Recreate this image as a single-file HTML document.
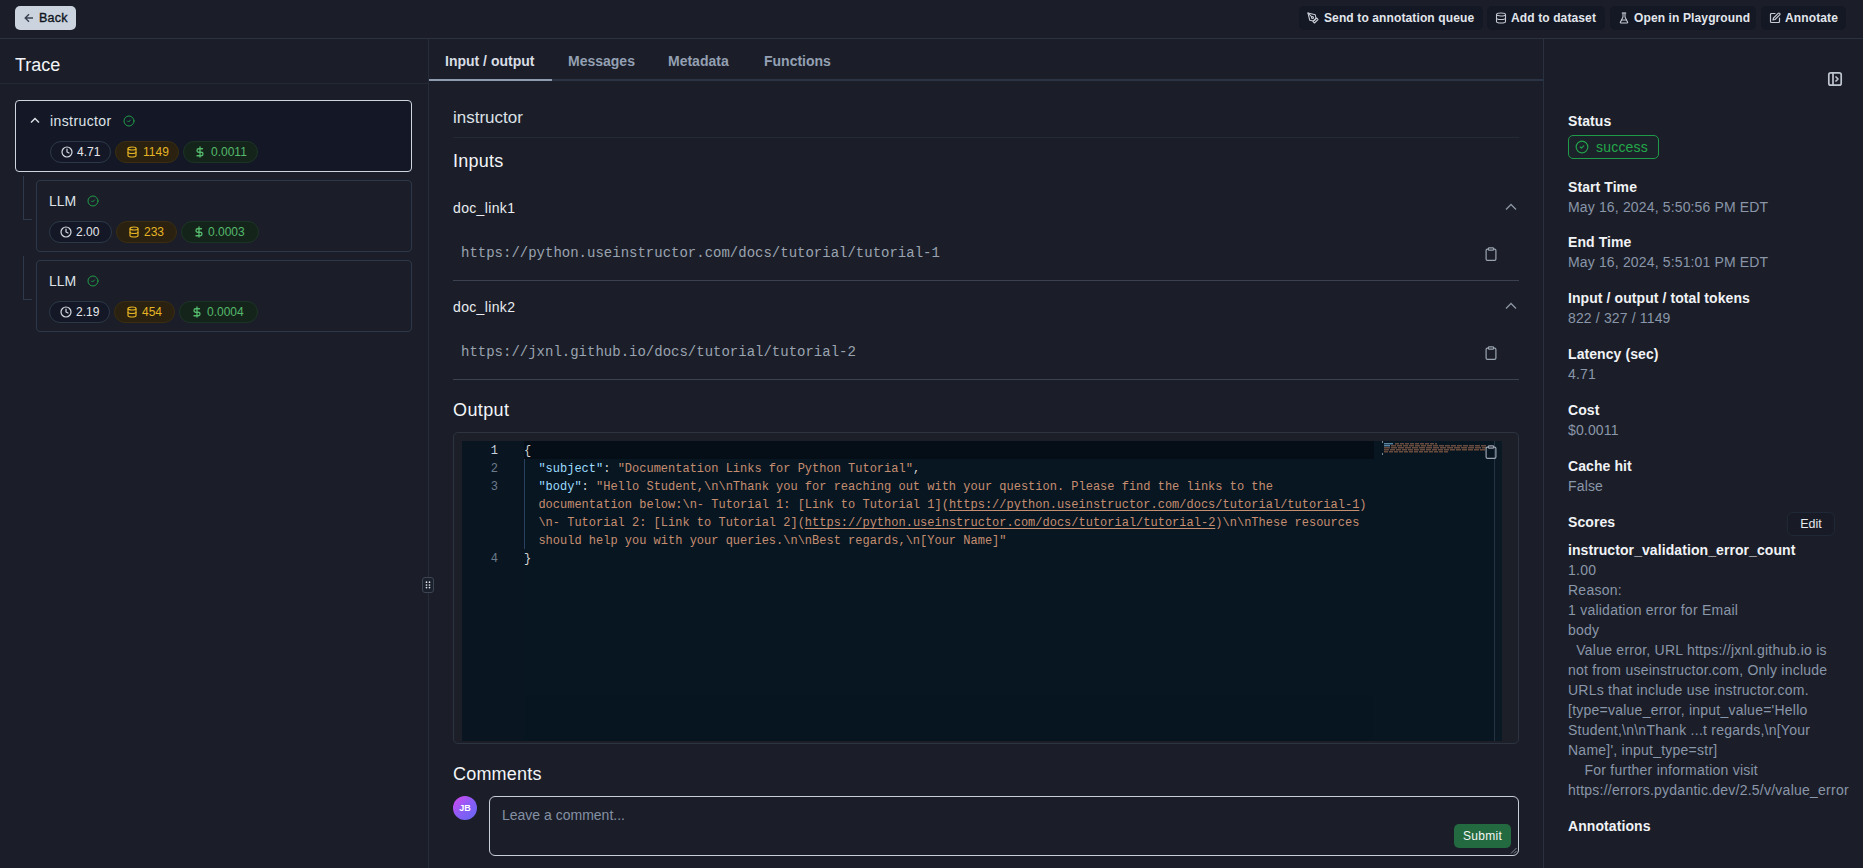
<!DOCTYPE html>
<html><head><meta charset="utf-8">
<style>
*{box-sizing:border-box;margin:0;padding:0}
html,body{width:1863px;height:868px;overflow:hidden;background:#1b1e28;font-family:"Liberation Sans",sans-serif;color:#e6e9ee}
.abs{position:absolute}
.hline{position:absolute;height:1px;background:#2a3240}
.vline{position:absolute;width:1px;background:#2a3240}
.tbtn{position:absolute;top:6px;height:24px;background:#141824;border-radius:5px;font-size:12px;font-weight:700;color:#e2e6ec;line-height:24px;white-space:nowrap;letter-spacing:0.12px}
.tbtn svg{position:absolute;top:6px}
.tbtn span{position:absolute;top:0}
.node{position:absolute;border:1px solid #2c3849;border-radius:4px;background:#1b1e28}
.node.sel{border-color:#cfd5de;background:#141826}
.nname{position:absolute;font-size:14px;color:#dfe3e8;white-space:nowrap}
.pill{position:absolute;height:22px;border-radius:11px;border:1px solid #2c3848;font-size:12px;line-height:20px;white-space:nowrap;background:#141826;color:#e5e7eb}
.pill svg{position:absolute;top:4px}
.pill span{position:absolute;top:0}
.pill.y{background:#2a2110;border-color:#3a2d10;color:#e5b424}
.pill.g{background:#14241b;border-color:#1c3425;color:#55b96c}
.tab{position:absolute;top:53px;font-size:14px;font-weight:700;color:#94a0b3;white-space:nowrap}
.lbl{position:absolute;left:1568px;font-size:14px;font-weight:700;color:#f1f3f6;white-space:nowrap;letter-spacing:0.08px}
.val{position:absolute;left:1568px;font-size:14px;color:#8a96a9;letter-spacing:0.15px;white-space:nowrap}
.mono{font-family:"Liberation Mono",monospace}
.code{position:absolute;font-family:"Liberation Mono",monospace;font-size:12px;line-height:18px;white-space:pre;color:#c68e70}
.k{color:#9cdcfe}.p{color:#d4d4d4}
.u{text-decoration:underline;text-underline-offset:2px}
</style></head><body>

<!-- top bar -->
<div class="abs" style="left:15px;top:6px;width:61px;height:24px;background:#cbd3de;border-radius:5px"></div>
<svg class="abs" style="left:24px;top:13px" width="10" height="10" viewBox="0 0 10 10"><path d="M9 5H1.5M5 1.2L1.2 5L5 8.8" stroke="#3b4252" stroke-width="1.4" fill="none"/></svg>
<div class="abs" style="left:39px;top:11px;font-size:12.5px;font-weight:400;color:#0f1420;-webkit-text-stroke:0.35px #0f1420;letter-spacing:0.2px">Back</div>

<div class="tbtn" style="left:1299px;width:184px"><svg style="left:8px" width="12" height="12" viewBox="0 0 24 24" fill="none" stroke="#c4c9d2" stroke-width="2.2" stroke-linecap="round" stroke-linejoin="round"><path d="m12 19 7-7 3 3-7 7-3-3z"/><path d="m18 13-1.5-7.5L2 2l3.5 14.5L13 18l5-5z"/><path d="m2 2 7.586 7.586"/><circle cx="11" cy="11" r="2"/></svg><span style="left:25px">Send to annotation queue</span></div>
<div class="tbtn" style="left:1487px;width:118px"><svg style="left:8px" width="12" height="12" viewBox="0 0 24 24" fill="none" stroke="#c4c9d2" stroke-width="2.2"><ellipse cx="12" cy="5" rx="9" ry="3"/><path d="M3 5v14a9 3 0 0 0 18 0V5"/><path d="M3 12a9 3 0 0 0 18 0"/></svg><span style="left:24px">Add to dataset</span></div>
<div class="tbtn" style="left:1610px;width:146px"><svg style="left:8px" width="12" height="12" viewBox="0 0 24 24" fill="none" stroke="#c4c9d2" stroke-width="2.2" stroke-linecap="round" stroke-linejoin="round"><path d="M10 2v7.527a2 2 0 0 1-.211.896L4.72 20.55a1 1 0 0 0 .9 1.45h12.76a1 1 0 0 0 .9-1.45l-5.069-10.127A2 2 0 0 1 14 9.527V2"/><path d="M8.5 2h7"/><path d="M7 16h10"/></svg><span style="left:24px">Open in Playground</span></div>
<div class="tbtn" style="left:1761px;width:85px"><svg style="left:8px" width="12" height="12" viewBox="0 0 24 24" fill="none" stroke="#c4c9d2" stroke-width="2.4" stroke-linecap="round" stroke-linejoin="round"><path d="M12 3H5a2 2 0 0 0-2 2v14a2 2 0 0 0 2 2h14a2 2 0 0 0 2-2v-7"/><path d="M18.375 2.625a2.121 2.121 0 1 1 3 3L12 15l-4 1 1-4Z"/></svg><span style="left:24px">Annotate</span></div>

<div class="hline" style="left:0;top:38px;width:1863px"></div>
<div class="vline" style="left:428px;top:39px;height:829px;background:#242c39"></div>
<div class="vline" style="left:1543px;top:39px;height:829px"></div>

<!-- left panel -->
<div class="abs" style="left:15px;top:55px;font-size:18px;color:#f3f5f8">Trace</div>
<div class="hline" style="left:0;top:83px;width:428px;background:#232a36"></div>


<!-- tree -->
<div class="node sel" style="left:15px;top:100px;width:397px;height:72px"></div>
<svg class="abs" style="left:30px;top:116px" width="10" height="8" viewBox="0 0 10 8"><path d="M1 6.5L5 2.5L9 6.5" stroke="#d9dee5" stroke-width="1.5" fill="none"/></svg>
<div class="nname" style="left:50px;top:113px;letter-spacing:0.4px">instructor</div>
<svg class="abs" style="left:123px;top:115px" width="12" height="12" viewBox="0 0 24 24" fill="none" stroke="#22a04b" stroke-width="1.9" stroke-linecap="round" stroke-linejoin="round"><circle cx="12" cy="12" r="10"/><path d="m9 12 2 2 4-4"/></svg>
<div class="pill" style="left:50px;top:141px;width:61px"><svg style="left:10px" width="12" height="12" viewBox="0 0 24 24" fill="none" stroke="#d5d9e0" stroke-width="2.4" stroke-linecap="round"><circle cx="12" cy="12" r="10"/><path d="M12 6v6l4 2"/></svg><span style="left:26px">4.71</span></div>
<div class="pill y" style="left:115px;top:141px;width:64px"><svg style="left:10px" width="12" height="12" viewBox="0 0 24 24" fill="none" stroke="#e5b424" stroke-width="2.4"><ellipse cx="12" cy="5" rx="8" ry="3"/><path d="M4 5v14a8 3 0 0 0 16 0V5"/><path d="M4 12a8 3 0 0 0 16 0"/></svg><span style="left:27px">1149</span></div>
<div class="pill g" style="left:183px;top:141px;width:75px"><svg style="left:11px" width="10" height="12" viewBox="0 0 20 24" fill="none" stroke="#55b96c" stroke-width="2.6" stroke-linecap="round"><path d="M10 2v20"/><path d="M15 5.5H7.5a3.5 3.5 0 0 0 0 7h5a3.5 3.5 0 0 1 0 7H4"/></svg><span style="left:27px">0.0011</span></div>

<div class="vline" style="left:23px;top:176px;height:44px;background:#2e3a4b"></div>
<div class="hline" style="left:23px;top:219px;width:9px;background:#2e3a4b"></div>
<div class="node" style="left:36px;top:180px;width:376px;height:72px"></div>
<div class="nname" style="left:49px;top:193px">LLM</div>
<svg class="abs" style="left:87px;top:195px" width="12" height="12" viewBox="0 0 24 24" fill="none" stroke="#22a04b" stroke-width="1.9" stroke-linecap="round" stroke-linejoin="round"><circle cx="12" cy="12" r="10"/><path d="m9 12 2 2 4-4"/></svg>
<div class="pill" style="left:49px;top:221px;width:63px"><svg style="left:10px" width="12" height="12" viewBox="0 0 24 24" fill="none" stroke="#d5d9e0" stroke-width="2.4" stroke-linecap="round"><circle cx="12" cy="12" r="10"/><path d="M12 6v6l4 2"/></svg><span style="left:26px">2.00</span></div>
<div class="pill y" style="left:116px;top:221px;width:61px"><svg style="left:11px" width="12" height="12" viewBox="0 0 24 24" fill="none" stroke="#e5b424" stroke-width="2.4"><ellipse cx="12" cy="5" rx="8" ry="3"/><path d="M4 5v14a8 3 0 0 0 16 0V5"/><path d="M4 12a8 3 0 0 0 16 0"/></svg><span style="left:27px">233</span></div>
<div class="pill g" style="left:181px;top:221px;width:78px"><svg style="left:12px" width="10" height="12" viewBox="0 0 20 24" fill="none" stroke="#55b96c" stroke-width="2.6" stroke-linecap="round"><path d="M10 2v20"/><path d="M15 5.5H7.5a3.5 3.5 0 0 0 0 7h5a3.5 3.5 0 0 1 0 7H4"/></svg><span style="left:26px">0.0003</span></div>

<div class="vline" style="left:23px;top:256px;height:44px;background:#2e3a4b"></div>
<div class="hline" style="left:23px;top:299px;width:9px;background:#2e3a4b"></div>
<div class="node" style="left:36px;top:260px;width:376px;height:72px"></div>
<div class="nname" style="left:49px;top:273px">LLM</div>
<svg class="abs" style="left:87px;top:275px" width="12" height="12" viewBox="0 0 24 24" fill="none" stroke="#22a04b" stroke-width="1.9" stroke-linecap="round" stroke-linejoin="round"><circle cx="12" cy="12" r="10"/><path d="m9 12 2 2 4-4"/></svg>
<div class="pill" style="left:49px;top:301px;width:61px"><svg style="left:10px" width="12" height="12" viewBox="0 0 24 24" fill="none" stroke="#d5d9e0" stroke-width="2.4" stroke-linecap="round"><circle cx="12" cy="12" r="10"/><path d="M12 6v6l4 2"/></svg><span style="left:26px">2.19</span></div>
<div class="pill y" style="left:114px;top:301px;width:61px"><svg style="left:11px" width="12" height="12" viewBox="0 0 24 24" fill="none" stroke="#e5b424" stroke-width="2.4"><ellipse cx="12" cy="5" rx="8" ry="3"/><path d="M4 5v14a8 3 0 0 0 16 0V5"/><path d="M4 12a8 3 0 0 0 16 0"/></svg><span style="left:27px">454</span></div>
<div class="pill g" style="left:179px;top:301px;width:79px"><svg style="left:12px" width="10" height="12" viewBox="0 0 20 24" fill="none" stroke="#55b96c" stroke-width="2.6" stroke-linecap="round"><path d="M10 2v20"/><path d="M15 5.5H7.5a3.5 3.5 0 0 0 0 7h5a3.5 3.5 0 0 1 0 7H4"/></svg><span style="left:27px">0.0004</span></div>

<!-- drag handle -->
<div class="abs" style="left:422px;top:577px;width:12px;height:16px;border:1px solid #3d4452;border-radius:3px;background:#1a202c"></div>
<svg class="abs" style="left:425px;top:580px" width="6" height="10" viewBox="0 0 6 10" fill="#e2e6ec"><circle cx="1.5" cy="2.2" r="0.85"/><circle cx="4.5" cy="2.2" r="0.85"/><circle cx="1.5" cy="5" r="0.85"/><circle cx="4.5" cy="5" r="0.85"/><circle cx="1.5" cy="7.6" r="0.85"/><circle cx="4.5" cy="7.6" r="0.85"/></svg>


<!-- tabs -->
<div class="hline" style="left:429px;top:79px;width:1114px;height:2px;background:#2b3445"></div>
<div class="abs" style="left:429px;top:79px;width:123px;height:2px;background:#8e9bb0"></div>
<div class="tab" style="left:445px;color:#d8dde5">Input / output</div>
<div class="tab" style="left:568px">Messages</div>
<div class="tab" style="left:668px">Metadata</div>
<div class="tab" style="left:764px">Functions</div>

<div class="abs" style="left:453px;top:108px;font-size:17px;color:#dde1e7">instructor</div>
<div class="hline" style="left:453px;top:137px;width:1066px;background:#232a36"></div>
<div class="abs" style="left:453px;top:151px;font-size:18px;color:#f3f5f8;letter-spacing:0.25px">Inputs</div>

<div class="abs" style="left:453px;top:200px;font-size:14px;color:#e9ecf0;letter-spacing:0.35px">doc_link1</div>
<svg class="abs" style="left:1505px;top:203px" width="12" height="8" viewBox="0 0 12 8"><path d="M1 6.5L6 1.5L11 6.5" stroke="#8c95a3" stroke-width="1.3" fill="none"/></svg>
<div class="abs mono" style="left:461px;top:245px;font-size:14px;color:#9aa3b0">https://python.useinstructor.com/docs/tutorial/tutorial-1</div>
<svg class="abs" style="left:1485px;top:247px" width="12" height="14" viewBox="0 0 12 14" fill="none" stroke="#9aa3b0" stroke-width="1.2"><rect x="1.1" y="2.1" width="9.8" height="11.3" rx="1.3"/><rect x="3.4" y="0.8" width="5.2" height="2.4" rx="0.8" fill="#1b1e28"/></svg>
<div class="hline" style="left:453px;top:280px;width:1066px;background:#3a4150"></div>

<div class="abs" style="left:453px;top:299px;font-size:14px;color:#e9ecf0;letter-spacing:0.35px">doc_link2</div>
<svg class="abs" style="left:1505px;top:302px" width="12" height="8" viewBox="0 0 12 8"><path d="M1 6.5L6 1.5L11 6.5" stroke="#8c95a3" stroke-width="1.3" fill="none"/></svg>
<div class="abs mono" style="left:461px;top:344px;font-size:14px;color:#9aa3b0">https://jxnl.github.io/docs/tutorial/tutorial-2</div>
<svg class="abs" style="left:1485px;top:346px" width="12" height="14" viewBox="0 0 12 14" fill="none" stroke="#9aa3b0" stroke-width="1.2"><rect x="1.1" y="2.1" width="9.8" height="11.3" rx="1.3"/><rect x="3.4" y="0.8" width="5.2" height="2.4" rx="0.8" fill="#1b1e28"/></svg>
<div class="hline" style="left:453px;top:379px;width:1066px;background:#3a4150"></div>

<div class="abs" style="left:453px;top:400px;font-size:18px;color:#f3f5f8;letter-spacing:0.4px">Output</div>

<!-- editor -->
<div class="abs" style="left:453px;top:432px;width:1066px;height:312px;border:1px solid #2c3442;border-radius:5px;background:#1c1f28"></div>
<div class="abs" style="left:462px;top:441px;width:1040px;height:300px;background:#081622"></div>
<div class="abs" style="left:525px;top:695px;width:848px;height:46px;background:#071521"></div>
<div class="abs" style="left:462px;top:441px;width:62px;height:300px;background:#091622"></div>
<div class="abs" style="left:524px;top:441px;width:850px;height:18px;background:#050e17"></div>
<div class="abs" style="left:1495px;top:441px;width:7px;height:300px;background:#0b1924"></div>
<div class="vline" style="left:1494px;top:441px;height:300px;background:#243241"></div>
<div class="vline" style="left:524px;top:459px;height:90px;background:#29405e"></div>
<!-- minimap -->
<div class="abs" style="left:1384px;top:443px;width:9px;height:1px;background:#5a86a6"></div>
<div class="abs" style="left:1395px;top:443px;width:42px;height:1px;background:repeating-linear-gradient(90deg,#664c3e 0 4px,transparent 4px 5px)"></div>
<div class="abs" style="left:1384px;top:445px;width:6px;height:1px;background:#5a86a6"></div>
<div class="abs" style="left:1391px;top:445px;width:95px;height:1px;background:repeating-linear-gradient(90deg,#664c3e 0 5px,transparent 5px 6px)"></div>
<div class="abs" style="left:1384px;top:447px;width:102px;height:1px;background:repeating-linear-gradient(90deg,#664c3e 0 6px,transparent 6px 7px)"></div>
<div class="abs" style="left:1384px;top:449px;width:102px;height:1px;background:repeating-linear-gradient(90deg,#664c3e 0 5px,transparent 5px 6px)"></div>
<div class="abs" style="left:1384px;top:451px;width:64px;height:1px;background:repeating-linear-gradient(90deg,#664c3e 0 4px,transparent 4px 5px)"></div>
<div class="abs" style="left:1382px;top:441px;width:1px;height:2px;background:#7f8a96"></div>
<div class="abs" style="left:1382px;top:453px;width:1px;height:2px;background:#7f8a96"></div>
<div class="abs" style="left:1384px;top:444px;width:9px;height:1px;background:#2a4254"></div>
<div class="abs" style="left:1395px;top:444px;width:42px;height:1px;background:repeating-linear-gradient(90deg,#3a2e2c 0 4px,transparent 4px 5px)"></div>
<div class="abs" style="left:1384px;top:446px;width:6px;height:1px;background:#2a4254"></div>
<div class="abs" style="left:1391px;top:446px;width:95px;height:1px;background:repeating-linear-gradient(90deg,#3a2e2c 0 5px,transparent 5px 6px)"></div>
<div class="abs" style="left:1384px;top:448px;width:102px;height:1px;background:repeating-linear-gradient(90deg,#3a2e2c 0 6px,transparent 6px 7px)"></div>
<div class="abs" style="left:1384px;top:450px;width:102px;height:1px;background:repeating-linear-gradient(90deg,#3a2e2c 0 5px,transparent 5px 6px)"></div>
<div class="abs" style="left:1384px;top:452px;width:64px;height:1px;background:repeating-linear-gradient(90deg,#3a2e2c 0 4px,transparent 4px 5px)"></div>
<div class="code" style="left:462px;top:442px;width:36px;text-align:right;color:#6d7a8a"><span style="color:#c8d2dc">1</span>
2
3



4</div>
<div class="code" style="left:524px;top:442px"><span class="p">{</span>
<span class="k">  "subject"</span><span class="p">: </span>"Documentation Links for Python Tutorial"<span class="p">,</span>
<span class="k">  "body"</span><span class="p">: </span>"Hello Student,\n\nThank you for reaching out with your question. Please find the links to the
  documentation below:\n- Tutorial 1: [Link to Tutorial 1](<span class="u">https://python.useinstructor.com/docs/tutorial/tutorial-1</span>)
  \n- Tutorial 2: [Link to Tutorial 2](<span class="u">https://python.useinstructor.com/docs/tutorial/tutorial-2</span>)\n\nThese resources
  should help you with your queries.\n\nBest regards,\n[Your Name]"
<span class="p">}</span></div>
<svg class="abs" style="left:1485px;top:445px" width="12" height="14" viewBox="0 0 12 14" fill="none" stroke="#9aa3b0" stroke-width="1.2"><rect x="1.1" y="2.1" width="9.8" height="11.3" rx="1.3"/><rect x="3.4" y="0.8" width="5.2" height="2.4" rx="0.8" fill="#1b1e28"/></svg>

<!-- comments -->
<div class="abs" style="left:453px;top:764px;font-size:18px;color:#f3f5f8;letter-spacing:0.2px">Comments</div>
<div class="abs" style="left:453px;top:796px;width:24px;height:24px;border-radius:12px;background:linear-gradient(135deg,#d946ef 0%,#8b5cf6 50%,#6366f1 100%);color:#fff;font-size:9px;font-weight:700;text-align:center;line-height:24px">JB</div>
<div class="abs" style="left:489px;top:796px;width:1030px;height:60px;border:1px solid #c9cfd8;border-radius:6px;background:#1b1e28"></div>
<div class="abs" style="left:502px;top:807px;font-size:14px;color:#8490a4">Leave a comment...</div>
<div class="abs" style="left:1454px;top:824px;width:57px;height:24px;border-radius:5px;background:#236a40;color:#f2f5f3;font-size:12px;text-align:center;line-height:24px;letter-spacing:0.3px">Submit</div>
<svg class="abs" style="left:1510px;top:847px" width="7" height="7" viewBox="0 0 7 7" stroke="#9aa1ab" stroke-width="0.8"><path d="M1 6.5L6.5 1M4 6.5L6.5 4"/></svg>


<!-- right panel -->
<svg class="abs" style="left:1827px;top:71px" width="16" height="16" viewBox="0 0 16 16" fill="none" stroke="#c0c6cf" stroke-width="1.7" stroke-linejoin="round" stroke-linecap="round"><rect x="1.8" y="1.8" width="12.4" height="12.4" rx="2"/><path d="M6 1.8v12.4"/><path d="M9 6l2 2-2 2"/></svg>
<div class="lbl" style="top:113px">Status</div><div class="abs" style="left:1568px;top:135px;width:91px;height:24px;border:1px solid #1f9a49;border-radius:5px;background:#1c2229"></div>
<svg class="abs" style="left:1575px;top:140px" width="14" height="14" viewBox="0 0 24 24" fill="none" stroke="#22a34c" stroke-width="2" stroke-linecap="round" stroke-linejoin="round"><circle cx="12" cy="12" r="10"/><path d="m9 12 2 2 4-4"/></svg>
<div class="abs" style="left:1596px;top:139px;font-size:14px;color:#22a84a;letter-spacing:0.2px">success</div>
<div class="lbl" style="top:179px">Start Time</div><div class="val" style="top:199px">May 16, 2024, 5:50:56 PM EDT</div><div class="lbl" style="top:234px">End Time</div><div class="val" style="top:254px">May 16, 2024, 5:51:01 PM EDT</div><div class="lbl" style="top:290px">Input / output / total tokens</div><div class="val" style="top:310px">822 / 327 / 1149</div><div class="lbl" style="top:346px">Latency (sec)</div><div class="val" style="top:366px">4.71</div><div class="lbl" style="top:402px">Cost</div><div class="val" style="top:422px">$0.0011</div><div class="lbl" style="top:458px">Cache hit</div><div class="val" style="top:478px">False</div><div class="lbl" style="top:514px">Scores</div><div class="abs" style="left:1787px;top:512px;width:48px;height:24px;border:1px solid #1f2836;border-radius:6px;background:#181b25;color:#e6e9ee;font-size:12.5px;text-align:center;line-height:22px">Edit</div>
<div class="lbl" style="top:542px">instructor_validation_error_count</div><div class="val" style="top:560px;line-height:20px;white-space:pre;letter-spacing:0.24px">1.00
Reason:
1 validation error for Email
body
  Value error, URL https://jxnl.github.io is
not from useinstructor.com, Only include
URLs that include use instructor.com.
[type=value_error, input_value='Hello
Student,\n\nThank ...t regards,\n[Your
Name]', input_type=str]
    For further information visit
https://errors.pydantic.dev/2.5/v/value_error</div>
<div class="lbl" style="top:818px">Annotations</div>
</body></html>
